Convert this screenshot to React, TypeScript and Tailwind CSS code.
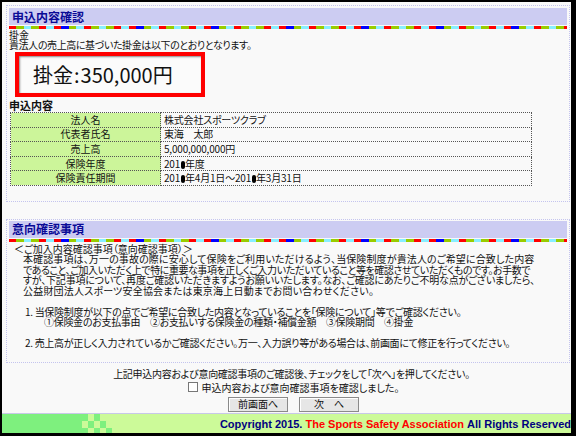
import React from 'react';

const jp = "font-['Noto_Sans_CJK_JP',sans-serif] [font-feature-settings:'palt']";

const stripe =
  'h-[3px] mt-[1px] bg-[repeating-linear-gradient(90deg,#ff0000_0px,#ff0000_7px,#99cc00_7px,#99cc00_15px,#88eeff_15px,#88eeff_22px,#99cc00_22px,#99cc00_30px,#ff0000_30px,#ff0000_37px,#88eeff_37px,#88eeff_45px,#ff0000_45px,#ff0000_52px,#0000ff_52px,#0000ff_60px,#99cc00_60px,#99cc00_67px,#88eeff_67px,#88eeff_75px)]';

function Blot() {
  return <span className="mx-[0.5px] inline-block h-[8px] w-[4px] rounded-full bg-black align-[-1px]" />;
}

function PanelHeader({ title }: { title: string }) {
  return (
    <>
      <div className="flex h-[17px] items-center bg-[#ccccf2] pl-[3px] text-[12px] font-bold text-[#0a0a96]">
        {title}
      </div>
      <div className={stripe} />
    </>
  );
}

const rows: [string, React.ReactNode][] = [
  ['法人名', '株式会社スポーツクラブ'],
  ['代表者氏名', '東海　太郎'],
  ['売上高', '5,000,000,000円'],
  ['保険年度', <>201<Blot />年度</>],
  ['保険責任期間', <>201<Blot />年4月1日～201<Blot />年3月31日</>],
];

const checker = [
  [1, 0, 1, 0, 0],
  [0, 1, 0, 1, 0],
  [1, 0, 1, 0, 1],
];

export default function App() {
  return (
    <div className={`h-[436px] w-[576px] overflow-hidden border-b-[3px] border-l-2 border-r-[5px] border-t-2 border-black bg-[#f9f9f9] text-[10px] leading-[10px] text-[#111] ${jp}`}>
      {/* 申込内容確認 */}
      <div className="ml-[4px] mr-[1px] mt-[3px] border border-dotted border-[#c4c4ee] px-[2px] pb-[15px] pt-[2px]">
        <PanelHeader title="申込内容確認" />
        <div className="mt-[1px]">掛金</div>
        <div className="tracking-[-0.4px]">貴法人の売上高に基づいた掛金は以下のとおりとなります。</div>
        <div className="ml-[6px] mt-[2px] flex h-[45px] w-[190px] items-center border-4 border-[#ff0000] bg-[#fbfbfb] pl-[14px] text-[20px] leading-none shadow-[inset_1px_1px_2px_#888]">
          掛金<span className="mx-[1px]">:</span>350,000円
        </div>
        <div className="mt-[2px] text-[11px] font-bold leading-[12px]">申込内容</div>
        <table className="ml-[1px] mt-[1px] w-[522px] border-collapse border border-dotted border-[#555]">
          <tbody>
            {rows.map(([label, value]) => (
              <tr key={label}>
                <td className="h-[14.6px] w-[150px] border border-dotted border-[#555] bg-[#ccf59a] p-0 text-center leading-[10px]">
                  {label}
                </td>
                <td className="h-[14.6px] border border-dotted border-[#555] p-0 pl-[3px] leading-[10px] tracking-[-0.2px]">{value}</td>
              </tr>
            ))}
          </tbody>
        </table>
      </div>

      {/* 意向確認事項 */}
      <div className="ml-[4px] mr-[1px] mt-[17px] border border-dotted border-[#c4c4ee] px-[2px] pb-[13px] pt-[1px] leading-[10.5px]">
        <PanelHeader title="意向確認事項" />
        <div className="mt-[2px] whitespace-nowrap">
          <div className="pl-[5px]">＜ご加入内容確認事項（意向確認事項）＞</div>
          <div className="pl-[14px]">
            <div className="tracking-[0.12px]">本確認事項は、万一の事故の際に安心して保険をご利用いただけるよう、当保険制度が貴法人のご希望に合致した内容</div>
            <div className="tracking-[-0.45px]">であること、ご加入いただく上で特に重要な事項を正しくご入力いただいていること等を確認させていただくものです。お手数で</div>
            <div className="tracking-[-0.2px]">すが、下記事項について、再度ご確認いただきますようお願いいたします。なお、ご確認にあたりご不明な点がございましたら、</div>
            <div className="tracking-[0.2px]">公益財団法人スポーツ安全協会または東京海上日動までお問い合わせください。</div>
          </div>
          <div className="h-[10.5px]" />
          <div className="pl-[16px] tracking-[-0.3px]">1. 当保険制度が以下の点でご希望に合致した内容となっていることを「保険について」等でご確認ください。</div>
          <div className="pl-[35px] tracking-[-0.3px]">①保険金のお支払事由　②お支払いする保険金の種類・補償金額　③保険期間　④掛金</div>
          <div className="h-[10.5px]" />
          <div className="pl-[16px] tracking-[-0.3px]">2. 売上高が正しく入力されているかご確認ください。万一、入力誤り等がある場合は、前画面にて修正を行ってください。</div>
        </div>
      </div>

      <div className="mt-[5px] flex flex-col items-center">
        <div className="pl-[10px] leading-[11px] tracking-[-0.3px]">上記申込内容および意向確認事項のご確認後、チェックをして「次へ」を押してください。</div>
        <label className="mt-[3px] flex items-center gap-[4px] pl-[14px] leading-[11px]">
          <span className="inline-block h-[10px] w-[10px] border border-[#777] bg-white" />
          申込内容および意向確認事項を確認しました。
        </label>
        <div className="mt-[4px] flex gap-[11px] pl-[14px]">
          <button className="flex h-[15px] w-[60px] items-center justify-center border border-[#8a8a8a] bg-[#e6e6e6] text-[10px] leading-none shadow-[inset_1px_1px_0_#fff]">
            前画面へ
          </button>
          <button className="flex h-[15px] w-[60px] items-center justify-center border border-[#8a8a8a] bg-[#e6e6e6] text-[10px] leading-none shadow-[inset_1px_1px_0_#fff]">
            次　へ
          </button>
        </div>
      </div>

      <div className="mt-[1px] flex h-[22px] border-t border-[#c8c8e8]">
        <div className="w-[80px] bg-[#7ef07e]" />
        <div className="grid grid-cols-[repeat(5,6px)] grid-rows-[repeat(3,7px)]">
          {checker.flat().map((g, i) => (
            <div key={i} className={g ? 'bg-[#7ef07e]' : 'bg-[#ccfa99]'} />
          ))}
        </div>
        <div className="flex flex-1 items-center justify-end whitespace-nowrap bg-[#ccfa99] font-['Liberation_Sans',sans-serif] text-[11px] font-bold text-[#000080]">
          Copyright 2015.&nbsp;<span className="text-[#ff0000]">The Sports Safety Association</span>&nbsp;All Rights Reserved
        </div>
      </div>
    </div>
  );
}
